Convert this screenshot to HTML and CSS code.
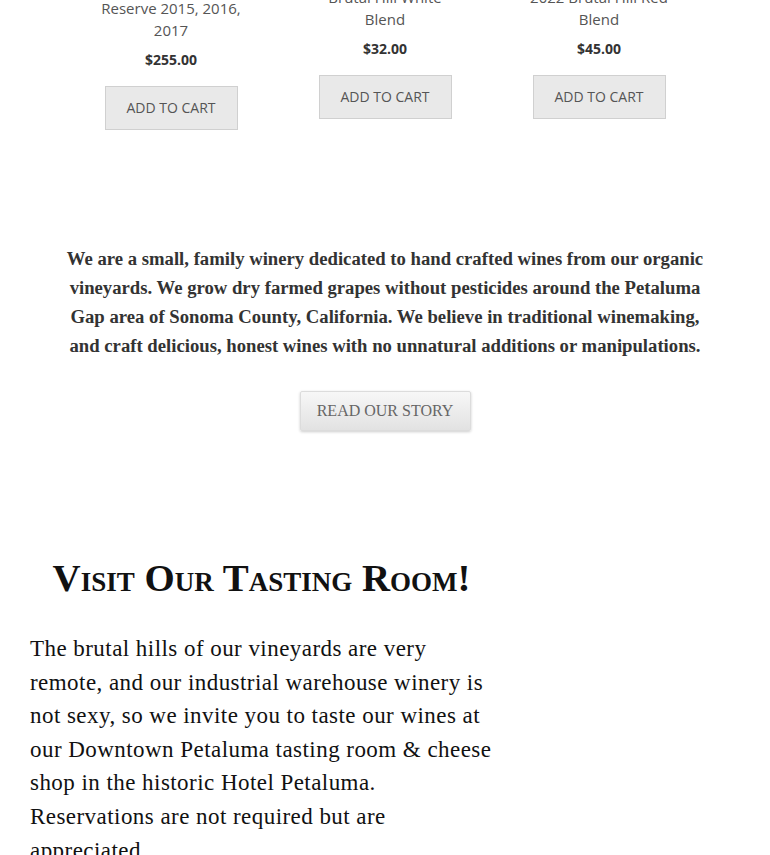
FILE: index.html
```html
<!DOCTYPE html>
<html lang="en">
<head>
<meta charset="utf-8">
<title>Brutal Hill Winery</title>
<link rel="stylesheet" href="styles.css">
</head>
<body>
<div class="page">
  <section class="products">
    <div class="product">
      <h3 class="product-title">Brutal Hill Pinot Noir Vertical<br> Reserve 2015, 2016, 2017</h3>
      <span class="price">$255.00</span>
      <a class="cart-btn" href="#">Add to cart</a>
    </div>
    <div class="product">
      <h3 class="product-title">2023 Sauvignon Brutal Hill White Blend</h3>
      <span class="price">$32.00</span>
      <a class="cart-btn" href="#">Add to cart</a>
    </div>
    <div class="product">
      <h3 class="product-title">Estate Vineyards 2022 Brutal Hill Red Blend</h3>
      <span class="price">$45.00</span>
      <a class="cart-btn" href="#">Add to cart</a>
    </div>
  </section>

  <section class="about">
    <p class="about-text">We are a small, family winery dedicated to hand crafted wines from our organic<br> vineyards. We grow dry farmed grapes without pesticides around the Petaluma<br> Gap area of Sonoma County, California. We believe in traditional winemaking,<br> and craft delicious, honest wines with no unnatural additions or manipulations.</p>
    <a class="story-btn" href="#">Read our story</a>
  </section>

  <section class="visit">
    <div class="visit-col">
      <h2 class="visit-title">Visit Our Tasting Room!</h2>
      <p class="visit-text">The brutal hills of our vineyards are very<br> remote, and our industrial warehouse winery is<br> not sexy, so we invite you to taste our wines at<br> our Downtown Petaluma tasting room &amp; cheese<br> shop in the historic Hotel Petaluma.<br> Reservations are not required but are<br> appreciated.</p>
    </div>
    <div class="visit-col"></div>
  </section>
</div>
</body>
</html>
```

FILE: styles.css
```css
* { box-sizing: border-box; }
html, body { margin: 0; padding: 0; background: #fff; }
body { overflow: hidden; }
.page { width: 770px; }

.products {
  display: flex;
  align-items: center;
  padding: 0 64px;
  margin-top: -47px;
}
.product {
  flex: 1;
  display: flex;
  flex-direction: column;
  align-items: center;
  text-align: center;
}
.product-title {
  margin: 0;
  width: 146px;
  font-family: "Open Sans", sans-serif;
  font-weight: 400;
  font-size: 15px;
  line-height: 22px;
  color: #555;
}
.price {
  margin-top: 8px;
  font-family: "Open Sans", sans-serif;
  font-weight: 700;
  font-size: 14px;
  line-height: 22px;
  color: #333;
}
.cart-btn {
  margin-top: 15px;
  display: inline-block;
  width: 133px;
  height: 44px;
  line-height: 42px;
  background: #e9e9e9;
  border: 1px solid #d0d0d0;
  font-family: "Open Sans", sans-serif;
  font-size: 14px;
  color: #555;
  text-decoration: none;
  text-transform: uppercase;
}

.about {
  padding-top: 114px;
  display: flex;
  flex-direction: column;
  align-items: center;
}
.about-text {
  margin: 0;
  width: 700px;
  text-align: center;
  font-family: "Liberation Serif", serif;
  font-weight: 700;
  font-size: 18.7px;
  line-height: 29px;
  color: #333;
}
.story-btn {
  margin-top: 31px;
  display: inline-block;
  width: 171px;
  height: 40px;
  line-height: 38px;
  text-align: center;
  background: linear-gradient(#f7f7f7, #e2e2e2);
  border: 1px solid #dcdcdc;
  border-radius: 2px;
  box-shadow: 0 1px 3px rgba(0,0,0,0.2);
  font-family: "Liberation Serif", serif;
  font-size: 16px;
  color: #666;
  text-decoration: none;
  text-transform: uppercase;
}

.visit {
  display: flex;
  padding: 122px 30px 0;
}
.visit-col {
  flex: 0 0 480px;
}
.visit-col + .visit-col { flex: 1; }
.visit-title {
  margin: 0;
  padding-right: 17px;
  text-align: center;
  font-family: "Liberation Serif", serif;
  font-variant: small-caps;
  font-weight: 700;
  font-size: 38.9px;
  line-height: 50px;
  color: #111;
}
.visit-text {
  margin: 29px 0 0;
  font-family: "Liberation Serif", serif;
  font-size: 23px;
  letter-spacing: 0.45px;
  line-height: 33.6px;
  color: #111;
}
```
